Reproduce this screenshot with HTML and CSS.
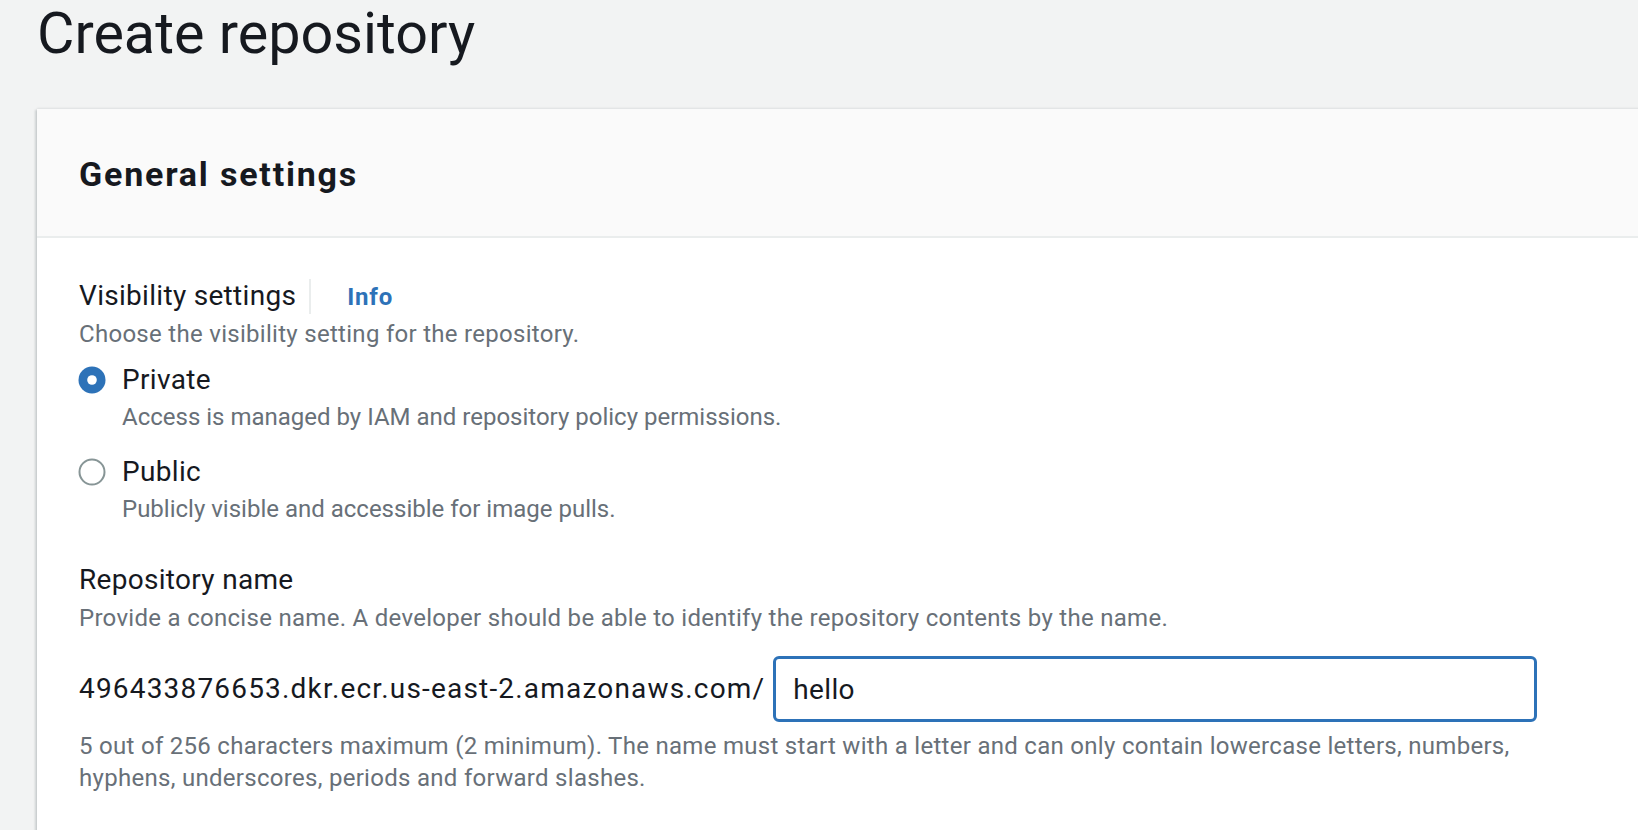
FILE: index.html
```html
<!DOCTYPE html>
<html lang="en">
<head>
<meta charset="utf-8">
<title>Create repository</title>
<link rel="stylesheet" href="styles.css">
</head>
<body>
<div class="page">
  <h1 class="page-title">Create repository</h1>
  <section class="card">
    <div class="card-header">
      <h2 class="card-title">General settings</h2>
    </div>
    <div class="card-body">
      <div class="field">
        <div class="label-row">
          <span class="label">Visibility settings</span>
          <span class="divider"></span>
          <a class="info-link">Info</a>
        </div>
        <div class="desc">Choose the visibility setting for the repository.</div>
        <div class="radio-group">
          <div class="radio-option">
            <span class="radio-ctrl">
              <svg width="28" height="28" viewBox="0 0 28 28"><circle cx="14" cy="14" r="13.5" fill="#2d72b8"/><circle cx="14" cy="14" r="4.8" fill="#ffffff"/></svg>
            </span>
            <span class="radio-label">Private</span>
            <span class="radio-desc">Access is managed by IAM and repository policy permissions.</span>
          </div>
          <div class="radio-option">
            <span class="radio-ctrl">
              <svg width="28" height="28" viewBox="0 0 28 28"><circle cx="14" cy="14" r="12.5" fill="#ffffff" stroke="#879596" stroke-width="2"/></svg>
            </span>
            <span class="radio-label">Public</span>
            <span class="radio-desc">Publicly visible and accessible for image pulls.</span>
          </div>
        </div>
      </div>
      <div class="field field-name">
        <div class="label-row">
          <span class="label">Repository name</span>
        </div>
        <div class="desc">Provide a concise name. A developer should be able to identify the repository contents by the name.</div>
        <div class="input-row">
          <span class="prefix">496433876653.dkr.ecr.us-east-2.amazonaws.com/</span>
          <input class="text-input" type="text" value="hello" readonly>
        </div>
        <div class="hint">5 out of 256 characters maximum (2 minimum). The name must start with a letter and can only contain lowercase letters, numbers, hyphens, underscores, periods and forward slashes.</div>
      </div>
    </div>
  </section>
</div>
</body>
</html>
```

FILE: styles.css
```css
html, body {
  margin: 0;
  padding: 0;
  overflow: hidden;
  background: #f2f3f3;
  font-family: Roboto, "Liberation Sans", sans-serif;
  color: #16191f;
}

.page {
  padding: 2px 0 0 37px;
}

.page-title {
  margin: 0;
  font-size: 57.5px;
  line-height: 64px;
  font-weight: 400;
  color: #16191f;
}

.card {
  margin-top: 43px;
  width: 1700px;
  background: #ffffff;
  box-shadow: -2px 1px 2px rgba(0, 28, 36, 0.15), 0 -1px 2px rgba(0, 28, 36, 0.08);
}

.card-header {
  background: #fafafa;
  padding: 43px 42px 40px 42px;
  border-bottom: 2px solid #eaeded;
}

.card-title {
  margin: 0;
  font-size: 34px;
  line-height: 44px;
  font-weight: 700;
  letter-spacing: 1.8px;
  color: #16191f;
}

.card-body {
  padding: 36px 42px 40px 42px;
}

.field {
  max-width: 1458px;
}

.field-name {
  margin-top: 32px;
}

.label-row {
  display: flex;
  align-items: baseline;
  height: 44px;
}

.label {
  font-size: 28px;
  line-height: 44px;
  letter-spacing: 0.3px;
  color: #16191f;
}

.divider {
  align-self: center;
  width: 0;
  height: 35px;
  border-left: 2px solid #eaeded;
  margin: 0 36px 0 13px;
}

.info-link {
  font-size: 24px;
  line-height: 32px;
  font-weight: 700;
  letter-spacing: 0.8px;
  color: #2d72b8;
  text-decoration: none;
}

.desc,
.hint {
  font-size: 24px;
  line-height: 32px;
  letter-spacing: 0.29px;
  color: #687078;
}

.radio-desc {
  font-size: 24px;
  line-height: 32px;
  color: #687078;
}

.radio-group {
  margin-top: 8px;
  display: flex;
  flex-direction: column;
  gap: 16px;
}

.radio-option {
  display: grid;
  grid-template-columns: 43px auto;
  align-items: center;
}

.radio-ctrl {
  display: flex;
  align-items: center;
  height: 44px;
  margin-left: -1px;
}

.radio-ctrl svg {
  display: block;
}

.radio-label {
  font-size: 28px;
  line-height: 44px;
  letter-spacing: 0.33px;
  color: #16191f;
}

.radio-desc {
  grid-column: 2;
  margin-top: -1px;
  padding-bottom: 1px;
}

.input-row {
  margin-top: 22px;
  display: flex;
  align-items: center;
  gap: 8px;
}

.prefix {
  font-size: 28px;
  line-height: 44px;
  letter-spacing: 1.18px;
  color: #16191f;
  white-space: nowrap;
}

.text-input {
  box-sizing: border-box;
  width: 764px;
  height: 66px;
  margin: 0;
  padding: 0 17px;
  border: 3px solid #2d72b8;
  border-radius: 6px;
  background: #ffffff;
  font-family: Roboto, "Liberation Sans", sans-serif;
  font-size: 28px;
  letter-spacing: 0.33px;
  color: #16191f;
  outline: none;
}

.hint {
  margin-top: 8px;
}
```
